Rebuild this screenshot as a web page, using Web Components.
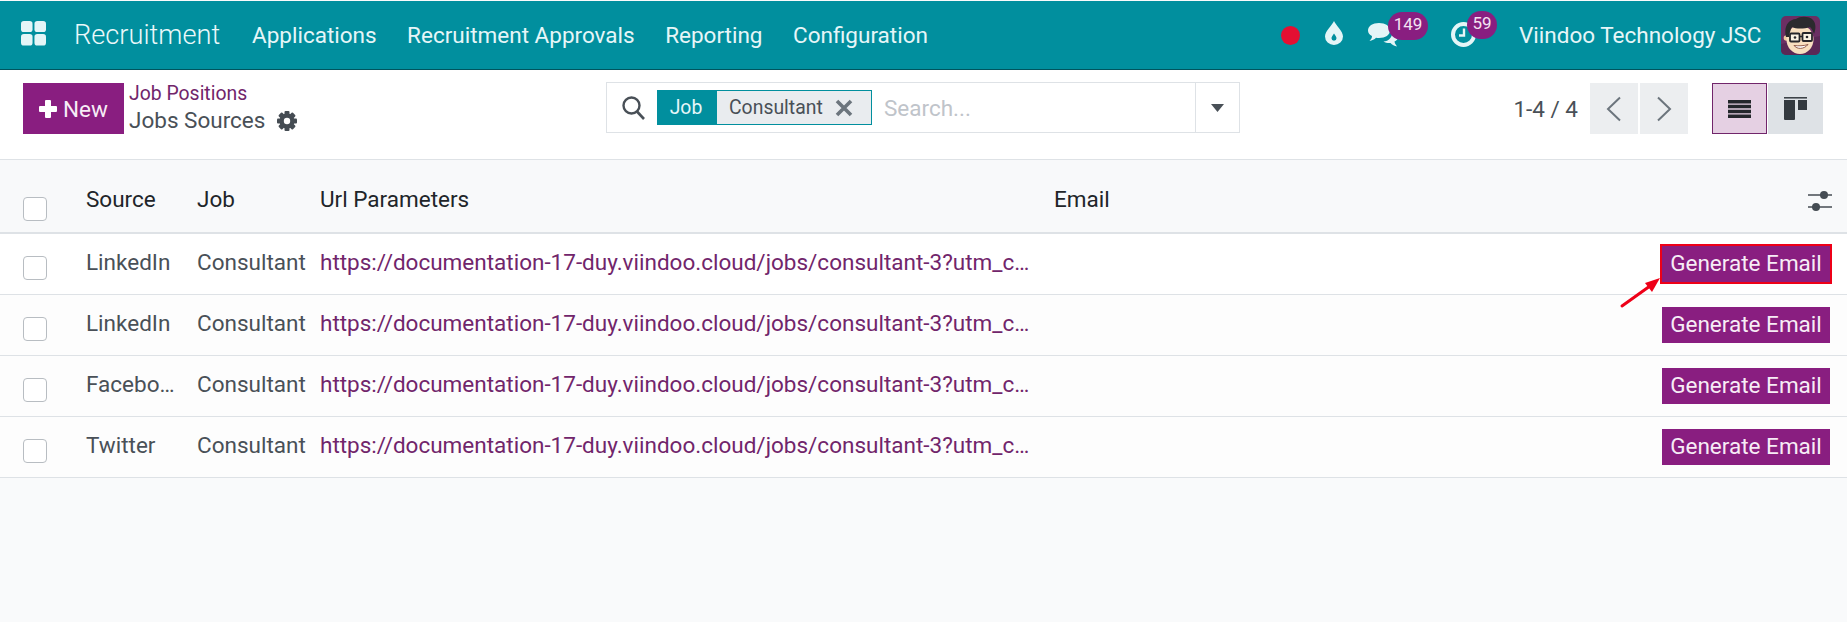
<!DOCTYPE html>
<html lang="en"><head><meta charset="utf-8"><title>Jobs Sources</title>
<style>
html,body{margin:0;padding:0;width:1847px;height:622px;overflow:hidden;background:#f9fafb;font-family:Roboto,"Liberation Sans",sans-serif;font-size:22.5px;color:#495057}
v-app{display:block}
</style></head><body>
<template id="t-nav"><style>
:host{display:flex;align-items:center;height:68px;margin-top:1px;border-bottom:1px solid #00545e;background:#018f9e;color:#e6f6f8;padding-left:21px;position:relative}
.grid{width:25px;height:25px;flex:none;margin-right:28px;margin-top:-3px}
.brand{font-size:27.2px;font-weight:300;color:#eaf8fa;margin-right:32px;margin-top:-1px;width:146px;white-space:nowrap}
.m{font-size:22.5px;margin-right:30.5px;white-space:nowrap}
.sys{margin-left:auto;display:flex;align-items:center;height:100%}
.ic{position:relative;flex:none;display:block}
.dot{width:19px;height:19px;border-radius:50%;background:#e40f32}
.badge{position:absolute;top:-11px;height:28px;border-radius:14px;background:#891e80;color:#f3e3f2;font-size:17px;line-height:25px;text-align:center}
.co{font-size:22.5px;margin-left:43px;white-space:nowrap;color:#e6f6f8;width:241px}
.av{margin-left:21px;margin-right:27px;width:39px;height:39px;flex:none;display:block}
</style>
<svg class="grid" viewBox="0 0 26 26"><rect x="0" y="0" width="12" height="11.5" rx="3" fill="#e4f5f7"/><rect x="14" y="0" width="12" height="11.5" rx="3" fill="#e4f5f7"/><rect x="0" y="13.5" width="12" height="12" rx="3" fill="#e4f5f7"/><rect x="14" y="13.5" width="12" height="12" rx="3" fill="#e4f5f7"/></svg>
<span class="brand">Recruitment</span>
<span class="m">Applications</span><span class="m">Recruitment Approvals</span><span class="m">Reporting</span><span class="m">Configuration</span>
<div class="sys">
<span class="ic dot"></span>
<svg class="ic" style="margin-left:25px;width:18px;height:24px;margin-top:-4px" viewBox="0 0 18 24"><path fill-rule="evenodd" d="M9 0C10.5 4 18 10 18 15.5A9 8.5 0 0 1 0 15.5C0 10 7.500 4 9 0ZM9 12.500C7.500 14.500 6.500 16 6.500 17.200A2.500 2.500 0 0 0 11.500 17.200C11.500 16 10.500 14.500 9 12.500Z" fill="#e4f5f7"/></svg>
<span class="ic" style="margin-left:25px;width:30px;height:24px;margin-top:-1px"><svg style="display:block" width="30" height="24" viewBox="0 0 30 24"><path d="M11 0C17.500 0 22 3 22 7.500S17.500 15 11 15C9.800 15 9 15 8 14.800C6.500 16.500 4 17.500 1.500 18C3 16.500 4 15 4 13C1.500 11.800 0 9.800 0 7.500C0 3 4.500 0 11 0Z" fill="#e4f5f7"/><path d="M24 8C27.500 9 30 11.500 30 14C30 16 28.500 17.500 26.500 18.500C26.800 20.500 28 22 29 23.500C26.500 23 24 22 22.500 20C20 20.200 17.500 19.800 15.500 18.500C20.500 18.200 25 14.500 24 8Z" fill="#e4f5f7"/></svg><span class="badge" style="left:20px;width:40px">149</span></span>
<span class="ic" style="margin-left:53px;width:25px;height:25px;margin-top:-1px"><svg style="display:block" width="25" height="25" viewBox="0 0 25 25"><circle cx="12.500" cy="12.500" r="10.500" fill="none" stroke="#e4f5f7" stroke-width="4"/><path d="M13 6.500V13.500H8" fill="none" stroke="#e4f5f7" stroke-width="2.400"/></svg><span class="badge" style="left:16px;width:30px">59</span></span>
<span class="co">Viindoo Technology JSC</span>
<svg class="av" viewBox="0 0 39 39"><rect width="39" height="39" rx="5" fill="#6b2f63"/><path d="M0 28L39 20V34A5 5 0 0 1 34 39H5A5 5 0 0 1 0 34Z" fill="#5a2856"/><circle cx="5.500" cy="22" r="2.800" fill="#efc9a2"/><ellipse cx="19" cy="23.500" rx="13.500" ry="14.500" fill="#f8dfbf"/><path d="M5 21C2.500 11 7 3.500 15 3C20 -.5 29 .5 32 4C35 7 35 13 33 18C32 15 31 13 29 11C23 13 15 13 11 11C9.500 14 8.500 17 8 21Z" fill="#2b2a2e"/><rect x="9" y="17.500" width="9.500" height="8" rx="1" fill="#fbf3e4" stroke="#26262a" stroke-width="1.800"/><rect x="21.500" y="17" width="9.500" height="8" rx="1" fill="#fbf3e4" stroke="#26262a" stroke-width="1.800"/><path d="M18.500 20.500H21.500" stroke="#26262a" stroke-width="1.600"/><circle cx="14" cy="21.500" r="1.300" fill="#26262a"/><circle cx="26" cy="21" r="1.300" fill="#26262a"/><path d="M13 29.500C16 33.500 23 33.500 27 28.500C23 30 17 30 13 29.500Z" fill="#fff" stroke="#7a3b2a" stroke-width=".8"/></svg>
</div></template>

<template id="t-cp"><style>
:host{display:flex;height:90px;background:#fff;border-bottom:1px solid #dee2e6;padding:13px 24px 0 23px;box-sizing:border-box;position:relative;align-items:flex-start}
.new{flex:none;display:flex;align-items:center;justify-content:center;gap:6px;width:101px;height:51px;background:#891e80;color:#f7ecf6;font-size:22.5px}
.crumb{margin-left:5px;flex:none;width:477px;margin-top:-2px}
.crumb a{display:block;color:#71256b;font-size:19.4px;line-height:26px}
.crumb div{display:flex;align-items:center;gap:12px;font-size:22.5px;color:#495057;line-height:27px}
.pg{margin-left:auto;display:flex;align-items:center}
.pt{font-size:22.5px;color:#495057;margin-right:12px;white-space:nowrap}
.b{width:48px;height:51px;background:#eceef0;display:flex;align-items:center;justify-content:center}
.t{width:55px;height:51px;display:flex;align-items:center;justify-content:center;box-sizing:border-box}
</style>
<div class="new"><svg width="18" height="18" viewBox="0 0 18 18"><path d="M7 0h4a1 1 0 0 1 1 1v5h5a1 1 0 0 1 1 1v4a1 1 0 0 1-1 1h-5v5a1 1 0 0 1-1 1H7a1 1 0 0 1-1-1v-5H1a1 1 0 0 1-1-1V7a1 1 0 0 1 1-1h5V1a1 1 0 0 1 1-1Z" fill="#fff"/></svg><span>New</span></div>
<div class="crumb"><a>Job Positions</a><div><span>Jobs Sources</span><svg width="20" height="20" viewBox="0 0 20 20"><g fill="#454c53"><circle cx="10" cy="10" r="7.500"/><rect x="7.500" y="0" width="5" height="20" rx="1"/><rect x="7.500" y="0" width="5" height="20" rx="1" transform="rotate(45 10 10)"/><rect x="7.500" y="0" width="5" height="20" rx="1" transform="rotate(90 10 10)"/><rect x="7.500" y="0" width="5" height="20" rx="1" transform="rotate(135 10 10)"/></g><circle cx="10" cy="10" r="3.200" fill="#fff"/></svg></div></div>
<slot></slot>
<div class="pg"><span class="pt">1-4 / 4</span>
<div class="b"><svg width="16" height="26" viewBox="0 0 16 26"><path d="M14 1.500L2 13L14 24.500" fill="none" stroke="#6c757d" stroke-width="2"/></svg></div>
<div class="b" style="margin-left:2px;margin-right:24px"><svg width="16" height="26" viewBox="0 0 16 26"><path d="M2 1.500L14 13L2 24.500" fill="none" stroke="#6c757d" stroke-width="2"/></svg></div>
<div class="t" style="background:#e5d0e3;border:1px solid #71256b"><svg width="23" height="18" viewBox="0 0 23 18"><path d="M0 1.800H23M0 6.600H23M0 11.400H23M0 16.200H23" stroke="#23272b" stroke-width="3.500"/></svg></div>
<div class="t" style="background:#dee2e6;margin-left:1px"><svg width="23" height="23" viewBox="0 0 23 23"><path d="M0 .8H23" stroke="#343a40" stroke-width="1.500"/><path d="M0 3H11V22a1 1 0 0 1-1 1H1a1 1 0 0 1-1-1Z" fill="#343a40"/><rect x="14" y="3" width="9" height="10" fill="#343a40"/></svg></div>
</div></template>

<template id="t-search"><style>
:host{display:flex;align-items:center;width:634px;height:51px;border:1px solid #dee2e6;box-sizing:border-box;background:#fff;flex:none;margin-top:-1px}
.s{margin-left:15px;flex:none;display:block}
.k{margin-left:12px;height:35px;width:60px;background:#018f9e;color:#e6f6f8;display:flex;align-items:center;justify-content:center;font-size:19.4px;flex:none;padding-right:2px;box-sizing:border-box}
.v{height:35px;box-sizing:border-box;width:155px;background:#e9ecef;border:1px solid #018f9e;border-left:0;display:flex;align-items:center;padding-left:12px;font-size:19.4px;color:#495057;flex:none;gap:12px}
.p{margin-left:12px;color:#bfc4ca;font-size:22.5px;flex:1}
.dd{width:43px;height:100%;border-left:1px solid #dee2e6;display:flex;align-items:center;justify-content:center;flex:none}
</style>
<svg class="s" width="23" height="24" viewBox="0 0 23 24"><circle cx="9.500" cy="9.500" r="8" fill="none" stroke="#495057" stroke-width="2.400"/><path d="M15 15.500L22 23" stroke="#495057" stroke-width="2.600"/></svg>
<span class="k">Job</span><span class="v"><span>Consultant</span><svg width="18" height="18" viewBox="0 0 18 18"><path d="M2 2L16 16M16 2L2 16" stroke="#6c757d" stroke-width="3.600"/></svg></span>
<span class="p">Search...</span>
<span class="dd"><svg width="13" height="8" viewBox="0 0 13 8"><path d="M0 0H13L6.500 8Z" fill="#495057"/></svg></span>
</template>

<template id="t-check"><style>:host{display:block;width:24px;height:24px;box-sizing:border-box;border:1px solid #b8bdc2;border-radius:4px;background:#fff;flex:none}</style></template>

<template id="t-head"><style>
:host{display:flex;height:74px;background:#f8f9fa;border-bottom:2px solid #dee2e6;box-sizing:border-box;align-items:center;padding:0 15px 0 23px;color:#212529;font-size:22.5px}
v-check{margin-top:26px}
span{margin-top:5px;flex:none}
svg{margin-left:auto;margin-top:10px;display:block}
</style>
<v-check></v-check><span style="margin-left:39px;width:111px">Source</span><span style="width:123px">Job</span><span style="width:734px">Url Parameters</span><span>Email</span>
<svg width="24" height="20" viewBox="0 0 24 20"><path d="M0 4H24M0 16H24" stroke="#454c53" stroke-width="1.500"/><circle cx="16" cy="4" r="4" fill="#454c53"/><circle cx="8" cy="16" r="4" fill="#454c53"/></svg>
</template>

<template id="t-btn"><style>
:host{display:flex;align-items:center;justify-content:center;width:168px;height:36px;box-sizing:border-box;padding-bottom:2px;background:#891e80;color:#f7ecf6;font-size:22.5px;white-space:nowrap;position:relative}
:host(.hi){outline:2.5px solid #ee0018}
</style><slot></slot></template>

<v-app>
<v-nav></v-nav>
<v-cp><v-search></v-search></v-cp>
<v-head></v-head>
<v-row2 src="LinkedIn" hi="1"></v-row2>
<v-row2 src="LinkedIn"></v-row2>
<v-row2 src="Facebo…"></v-row2>
<v-row2 src="Twitter"></v-row2>
</v-app>
<script>
function shell(id){return class extends HTMLElement{constructor(){super();this.attachShadow({mode:'open'}).appendChild(document.getElementById(id).content.cloneNode(true));}}}
customElements.define('v-nav',shell('t-nav'));
customElements.define('v-cp',shell('t-cp'));
customElements.define('v-search',shell('t-search'));
customElements.define('v-check',shell('t-check'));
customElements.define('v-head',shell('t-head'));
customElements.define('v-btn',shell('t-btn'));
class Row extends HTMLElement{
 constructor(){super();this.attachShadow({mode:'open'});}
 connectedCallback(){
  const src=this.getAttribute('src'),hi=this.hasAttribute('hi');
  this.shadowRoot.innerHTML=`<style>
:host{display:flex;align-items:center;height:61px;background:${hi?'#fff':'#fdfdfd'};border-bottom:1px solid #dee2e6;box-sizing:border-box;padding-left:23px;padding-right:17px;font-size:22.5px;color:#495057}
v-check{margin-top:7px}
.src,.job,.url{margin-top:-5px;white-space:nowrap;flex:none}
.src{margin-left:39px;width:111px}
.job{width:123px}
.url{color:#71256b}
v-btn{margin-left:auto}
svg{position:absolute;left:-41px;top:32px;overflow:visible}
</style><v-check></v-check><span class="src">${src}</span><span class="job">Consultant</span><span class="url">https://documentation-17-duy.viindoo.cloud/jobs/consultant-3?utm_c…</span><v-btn ${hi?'class="hi"':''}>Generate Email${hi?'<svg width="40" height="30" viewBox="0 0 40 30"><path d="M1 28L29 8" stroke="#ee0018" stroke-width="3" stroke-linecap="round"/><path d="M39 0L24 5L31 14Z" fill="#ee0018"/></svg>':''}</v-btn>`;
 }
}
customElements.define('v-row2',Row);
</script>
</body></html>
